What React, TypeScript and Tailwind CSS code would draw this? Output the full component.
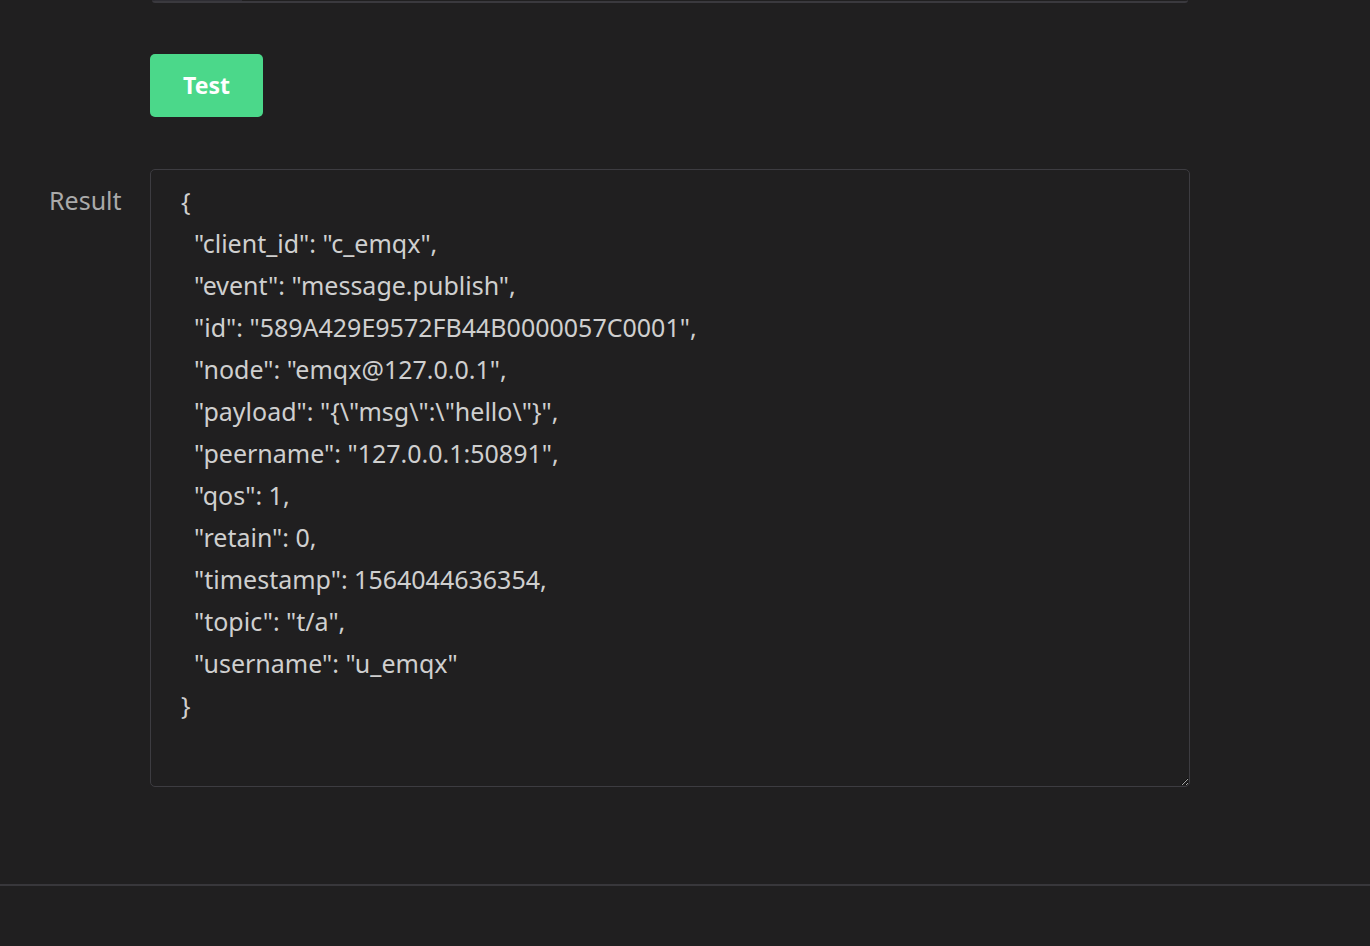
const RESULT = `{
  "client_id": "c_emqx",
  "event": "message.publish",
  "id": "589A429E9572FB44B0000057C0001",
  "node": "emqx@127.0.0.1",
  "payload": "{\\"msg\\":\\"hello\\"}",
  "peername": "127.0.0.1:50891",
  "qos": 1,
  "retain": 0,
  "timestamp": 1564044636354,
  "topic": "t/a",
  "username": "u_emqx"
}`

const FONT = "font-['Liberation_Sans',Arial,sans-serif]"

export default function App() {
  return (
    <div className={`min-h-[946px] bg-[#201f20] ${FONT}`}>
      <div className="flex flex-col">
        {/* tail of the field above */}
        <div className="ml-[152px] flex h-[3px] w-[1036px] overflow-hidden rounded-b-md border-b-2 border-[#3a393e]">
          <div className="w-[90px] bg-[#2e2d33]" />
        </div>

        <div className="ml-[150px] mt-[51px]">
          <button className={`h-[63px] w-[113px] rounded-[5px] bg-[#4bd88a] text-[23px] font-bold text-white ${FONT}`}>
            Test
          </button>
        </div>

        <div className="mt-[52px] flex">
          <label className="w-[150px] pl-[49px] pt-[13px] text-[25px] text-[#aaaaaa]">Result</label>
          <textarea
            readOnly
            value={RESULT}
            className={`h-[618px] w-[1040px] resize rounded-[5px] border border-[#3d3c41] bg-[#201f20] px-[30px] pt-[10px] text-[25px] leading-[42px] text-[#cfcfcf] outline-none ${FONT}`}
          />
        </div>

        <div className="mt-[97px] border-t-2 border-[#38373b]" />
      </div>
    </div>
  )
}
